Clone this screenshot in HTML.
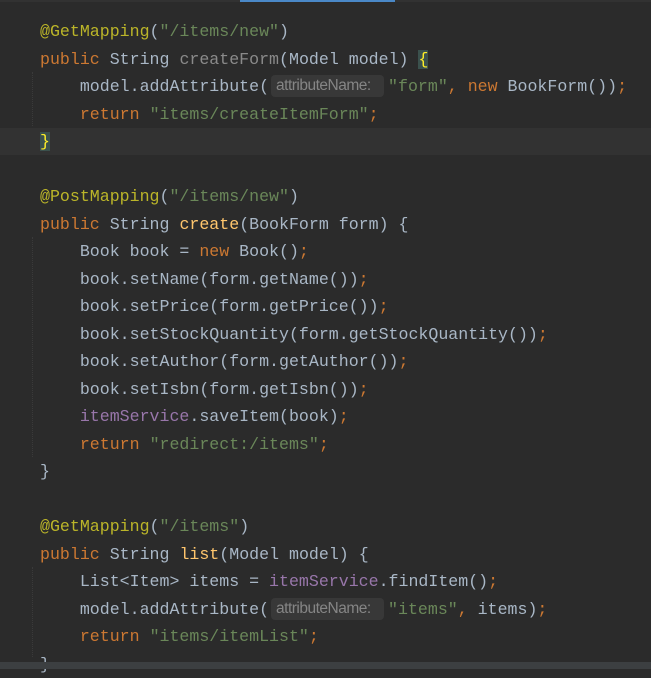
<!DOCTYPE html>
<html><head><style>
body{margin:0;width:651px;height:669px;background:#2b2b2b;overflow:hidden;position:relative;font-family:"Liberation Mono",monospace;font-size:16.6px;color:#a9b7c6}
.top{position:absolute;top:0;left:0;width:651px;height:2px;background:#323232}
.blue{position:absolute;top:0;left:240px;width:155px;height:2px;background:#4a88c7}
.hl{position:absolute;left:0;top:128px;width:651px;height:27px;background:#323232}
.bot{position:absolute;left:0;top:662px;width:651px;height:7px;background:#3c3f41}
.guide{position:absolute;left:32px;width:0;border-left:1px dotted #3a3a3a}
.l{position:absolute;left:40px;height:27px;line-height:27px;white-space:pre}
.a{color:#bbb529}.k{color:#cc7832}.s{color:#6a8759}.g{color:#8a8a8a}.y{color:#ffc66d}.p{color:#9876aa}
.h{display:inline-block;width:103px;font-family:"Liberation Sans",sans-serif;font-size:15.5px;line-height:22px;color:#858585;background:#383838;border-radius:4px;padding:0 5px;margin:0 4px 0 2px;vertical-align:1px;letter-spacing:-0.5px}
.b{background:#3b514d;color:#ffef28}
</style></head><body>
<div class="top"></div><div class="blue"></div><div class="hl"></div>
<div class="guide" style="top:72px;height:54px"></div>
<div class="guide" style="top:237px;height:220px"></div>
<div class="guide" style="top:567px;height:90px"></div>
<div class="l" style="top:18px"><span class="a">@GetMapping</span>(<span class="s">"/items/new"</span>)</div>
<div class="l" style="top:46px"><span class="k">public </span>String <span class="g">createForm</span>(Model model) <span class="b">{</span></div>
<div class="l" style="top:73px">    model.addAttribute(<span class="h">attributeName:</span><span class="s">"form"</span><span class="k">, new </span>BookForm())<span class="k">;</span></div>
<div class="l" style="top:101px">    <span class="k">return </span><span class="s">"items/createItemForm"</span><span class="k">;</span></div>
<div class="l" style="top:128px"><span class="b">}</span></div>
<div class="l" style="top:183px"><span class="a">@PostMapping</span>(<span class="s">"/items/new"</span>)</div>
<div class="l" style="top:211px"><span class="k">public </span>String <span class="y">create</span>(BookForm form) {</div>
<div class="l" style="top:238px">    Book book = <span class="k">new </span>Book()<span class="k">;</span></div>
<div class="l" style="top:266px">    book.setName(form.getName())<span class="k">;</span></div>
<div class="l" style="top:293px">    book.setPrice(form.getPrice())<span class="k">;</span></div>
<div class="l" style="top:321px">    book.setStockQuantity(form.getStockQuantity())<span class="k">;</span></div>
<div class="l" style="top:348px">    book.setAuthor(form.getAuthor())<span class="k">;</span></div>
<div class="l" style="top:376px">    book.setIsbn(form.getIsbn())<span class="k">;</span></div>
<div class="l" style="top:403px">    <span class="p">itemService</span>.saveItem(book)<span class="k">;</span></div>
<div class="l" style="top:431px">    <span class="k">return </span><span class="s">"redirect:/items"</span><span class="k">;</span></div>
<div class="l" style="top:458px">}</div>
<div class="l" style="top:513px"><span class="a">@GetMapping</span>(<span class="s">"/items"</span>)</div>
<div class="l" style="top:541px"><span class="k">public </span>String <span class="y">list</span>(Model model) {</div>
<div class="l" style="top:568px">    List&lt;Item&gt; items = <span class="p">itemService</span>.findItem()<span class="k">;</span></div>
<div class="l" style="top:596px">    model.addAttribute(<span class="h">attributeName:</span><span class="s">"items"</span><span class="k">, </span>items)<span class="k">;</span></div>
<div class="l" style="top:623px">    <span class="k">return </span><span class="s">"items/itemList"</span><span class="k">;</span></div>
<div class="l" style="top:651px">}</div>
<div class="bot"></div>
</body></html>
